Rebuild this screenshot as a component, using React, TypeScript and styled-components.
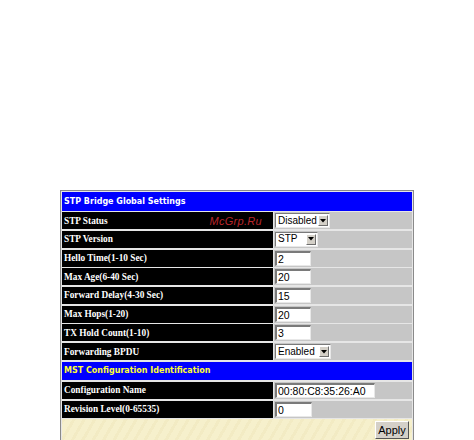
import * as React from 'react';
import styled, { createGlobalStyle } from 'styled-components';

const GlobalStyle = createGlobalStyle`
  html, body {
    margin: 0;
    padding: 0;
    background: #ffffff;
  }
`;

type Row =
  | { kind: 'select'; label: string; value: string; width: number; watermark?: boolean }
  | { kind: 'input'; label: string; value: string; width: number };

const bridgeRows: Row[] = [
  { kind: 'select', label: 'STP Status', value: 'Disabled', width: 55, watermark: true },
  { kind: 'select', label: 'STP Version', value: 'STP', width: 43 },
  { kind: 'input', label: 'Hello Time(1-10 Sec)', value: '2', width: 36 },
  { kind: 'input', label: 'Max Age(6-40 Sec)', value: '20', width: 36 },
  { kind: 'input', label: 'Forward Delay(4-30 Sec)', value: '15', width: 36 },
  { kind: 'input', label: 'Max Hops(1-20)', value: '20', width: 36 },
  { kind: 'input', label: 'TX Hold Count(1-10)', value: '3', width: 36 },
  { kind: 'select', label: 'Forwarding BPDU', value: 'Enabled', width: 56 },
];

const mstRows: Row[] = [
  { kind: 'input', label: 'Configuration Name', value: '00:80:C8:35:26:A0', width: 100 },
  { kind: 'input', label: 'Revision Level(0-65535)', value: '0', width: 37 },
];

export default function App() {
  const renderRow = (row: Row) => (
    <React.Fragment key={row.label}>
      <LabelCell>
        <span>{row.label}</span>
        {row.kind === 'select' && row.watermark && <Watermark>McGrp.Ru</Watermark>}
      </LabelCell>
      <ValueCell>
        {row.kind === 'select' ? (
          <SelectBox $width={row.width}>
            <SelectText>{row.value}</SelectText>
            <ArrowButton>
              <svg width="6" height="4" viewBox="0 0 6 4">
                <path d="M0 0 H6 L3 3.5 Z" fill="#000" />
              </svg>
            </ArrowButton>
          </SelectBox>
        ) : (
          <TextInput $width={row.width} defaultValue={row.value} readOnly />
        )}
      </ValueCell>
    </React.Fragment>
  );

  return (
    <Page>
      <GlobalStyle />
      <Panel>
        <Grid>
          <Header $color="#ffffff">STP Bridge Global Settings</Header>
          {bridgeRows.map(renderRow)}
          <Header $color="#ffff33">MST Configuration Identification</Header>
          {mstRows.map(renderRow)}
        </Grid>
        <Footer>
          <ApplyButton>Apply</ApplyButton>
        </Footer>
      </Panel>
    </Page>
  );
}

const Page = styled.div`
  width: 474px;
  height: 440px;
  overflow: hidden;
  padding: 190px 0 0 60px;
  box-sizing: border-box;
`;

const Panel = styled.div`
  width: 354px;
  border: 1px solid #8a8a8a;
  border-bottom: none;
  background: #e6e6e6;
  padding: 1px 1px 0 1px;
  box-sizing: border-box;
`;

const Grid = styled.div`
  display: grid;
  grid-template-columns: 211px 1fr;
  grid-auto-rows: minmax(17px, auto);
  column-gap: 1px;
  row-gap: 1.7px;
`;

const Header = styled.div<{ $color: string }>`
  grid-column: 1 / -1;
  height: 18.5px;
  background: #0000ff;
  color: ${(p) => p.$color};
  font-family: 'DejaVu Sans', Verdana, sans-serif;
  font-weight: bold;
  font-size: 8px;
  display: flex;
  align-items: center;
  padding-left: 2px;
  white-space: nowrap;
`;

const LabelCell = styled.div`
  background: #000000;
  color: #ffffff;
  font-family: 'Liberation Serif', 'Times New Roman', serif;
  font-weight: bold;
  font-size: 9.3px;
  display: flex;
  align-items: center;
  padding-left: 2px;
  white-space: nowrap;
`;

const Watermark = styled.span`
  margin-left: auto;
  margin-right: 11px;
  color: #b8262b;
  font-family: 'Liberation Sans', Arial, sans-serif;
  font-style: italic;
  font-weight: normal;
  font-size: 11px;
  letter-spacing: 0.3px;
`;

const ValueCell = styled.div`
  background: #c6c6c6;
  display: flex;
  align-items: center;
  padding-left: 1px;
`;

const SelectBox = styled.div<{ $width: number }>`
  width: ${(p) => p.$width}px;
  height: 15px;
  box-sizing: border-box;
  background: #ffffff;
  border: 1px solid;
  border-color: #7a7a7a #e8e8e8 #e8e8e8 #7a7a7a;
  display: flex;
  align-items: center;
  justify-content: space-between;
  padding: 0 1px 0 2px;
`;

const SelectText = styled.span`
  font-family: 'Liberation Sans', Arial, sans-serif;
  font-size: 10px;
  color: #000;
  line-height: 1;
`;

const ArrowButton = styled.span`
  width: 10px;
  height: 11px;
  box-sizing: border-box;
  background: #d4d0c8;
  border: 1px solid;
  border-color: #ffffff #6e6e6e #6e6e6e #ffffff;
  display: flex;
  align-items: center;
  justify-content: center;
`;

const TextInput = styled.input<{ $width: number }>`
  width: ${(p) => p.$width}px;
  height: 15px;
  box-sizing: border-box;
  margin: 0;
  padding: 0 1px;
  background: #ffffff;
  border: 1px solid;
  border-width: 2px 1px 1px 2px;
  border-color: #7a7a7a #e8e8e8 #e8e8e8 #7a7a7a;
  font-family: 'Liberation Sans', Arial, sans-serif;
  font-size: 10.5px;
  color: #000;
  outline: none;
`;

const Footer = styled.div`
  margin-top: 1px;
  height: 30px;
  background-color: #f6f0cc;
  background-image: repeating-linear-gradient(
      120deg,
      rgba(232, 220, 170, 0.25) 0px,
      rgba(232, 220, 170, 0.25) 3px,
      transparent 3px,
      transparent 9px
    );
  display: flex;
  justify-content: flex-end;
  align-items: flex-start;
  padding: 2px 3px 0 0;
  box-sizing: border-box;
`;

const ApplyButton = styled.button`
  width: 34px;
  height: 18px;
  padding: 0;
  background: #d4d0c8;
  border: 1px solid;
  border-color: #ffffff #555555 #555555 #ffffff;
  font-family: 'Liberation Sans', Arial, sans-serif;
  font-size: 11px;
  color: #000;
`;
